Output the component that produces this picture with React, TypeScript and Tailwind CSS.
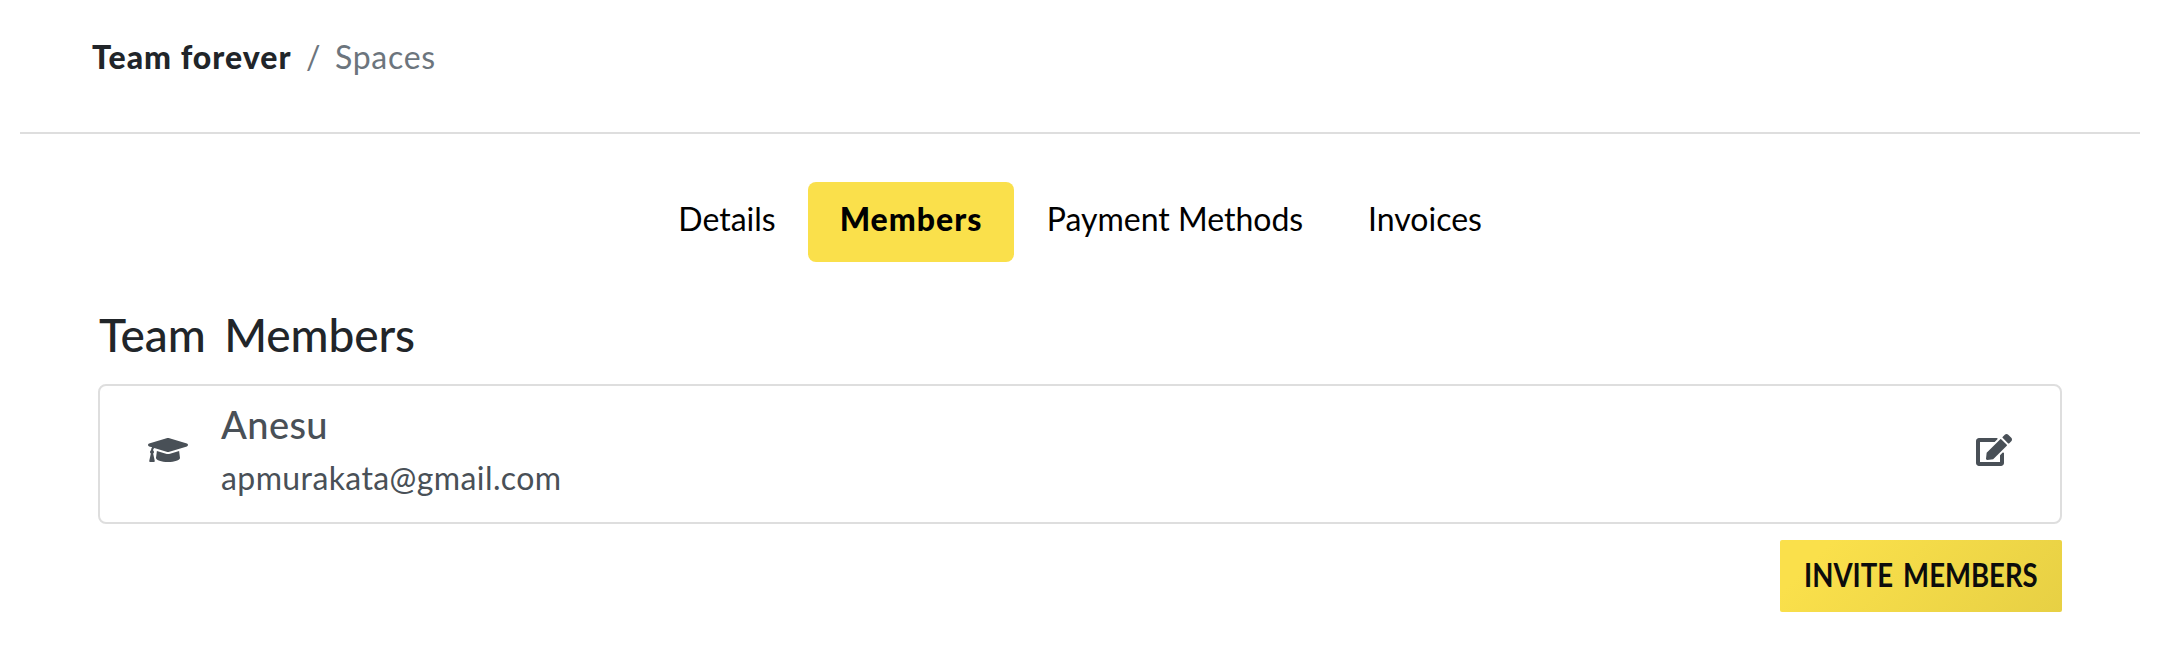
import React from "react";
import { FaEdit, FaGraduationCap } from "react-icons/fa";

export default function App() {
  return (
    <div className="h-[668px] w-[2176px] overflow-hidden bg-white pr-9 pl-5 font-[Lato,sans-serif] text-[#212529]">
      <nav className="flex h-[134px] items-start border-b-2 border-[#dedede] pt-[33px] pl-[72px] text-[32px] leading-[48px]">
        <span className="w-[214px] font-black tracking-[1px]">Team forever</span>
        <span className="w-[29px] text-[#6c757d]">/</span>
        <span className="tracking-[0.7px] text-[#6c757d]">Spaces</span>
      </nav>
      <div className="flex justify-center pt-12 text-[32px] leading-[48px] text-black">
        <span className="w-[162px] pt-[13px] pb-[19px] text-center">Details</span>
        <span className="w-[206px] rounded-lg bg-[#fae04b] pt-[13px] pb-[19px] text-center font-black tracking-[1px]">Members</span>
        <span className="w-[322px] pt-[13px] pb-[19px] text-center">Payment Methods</span>
        <span className="w-[178px] pt-[13px] pb-[19px] text-center">Invoices</span>
      </div>
      <main className="px-[78px] pt-[46px]">
        <h1 className="h-[76px] pl-px text-[46px] leading-[54px] font-medium tracking-[-0.1px] [word-spacing:7px]">Team Members</h1>
        <div className="flex h-[140px] items-center rounded-lg border-2 border-[#dedede] px-12 pb-[8px] text-[#495057]">
          <FaGraduationCap size={40} />
          <div className="ml-[33px] grow pt-px">
            <div className="h-[54px] text-[38px] leading-[48px] font-medium tracking-[0.4px]">Anesu</div>
            <div className="text-[32px] leading-[48px] tracking-[0.4px]">apmurakata@gmail.com</div>
          </div>
          <FaEdit size={36} />
        </div>
        <div className="flex justify-end pt-4">
          <button className="flex h-[72px] w-[282px] items-center justify-center rounded-[2px] bg-[linear-gradient(135deg,#fae04b_15%,#e7d044)] pb-[3px] text-[32px] font-bold text-[#0c0c0c]">
            <span className="scale-x-[0.86] whitespace-nowrap [word-spacing:4px]">INVITE MEMBERS</span>
          </button>
        </div>
      </main>
    </div>
  );
}
